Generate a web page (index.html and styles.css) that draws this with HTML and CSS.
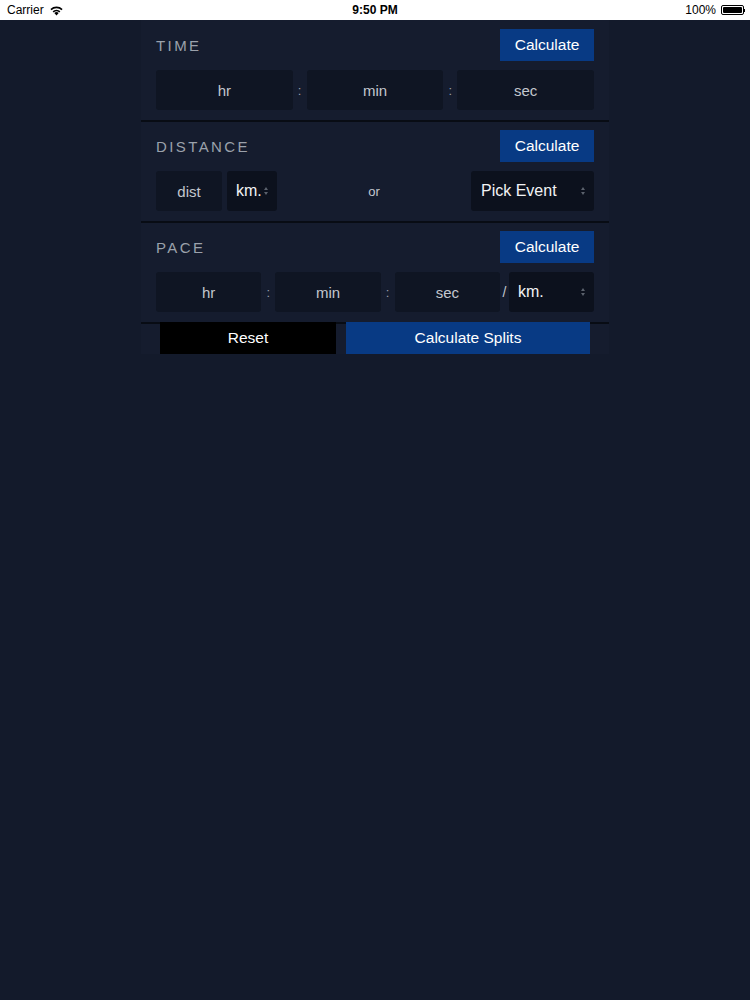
FILE: index.html
```html
<!DOCTYPE html>
<html lang="en">
<head>
    <meta charset="UTF-8">
    <meta name="viewport" content="width=device-width, initial-scale=1.0">
    <title>Pace Calculator</title>
    <link rel="stylesheet" href="styles.css">
</head>
<body>
    <div class="status-bar">
        <div class="status-left">
            Carrier
            <svg class="wifi" width="15" height="11" viewBox="0 0 15 11">
                <path d="M7.5 10.5 L5.3 8.1 A3.2 3.2 0 0 1 9.7 8.1 Z" fill="#000"/>
                <path d="M3.6 6.3 A5.6 5.6 0 0 1 11.4 6.3 L10.3 7.5 A4 4 0 0 0 4.7 7.5 Z" fill="#000"/>
                <path d="M1.4 4 A8.8 8.8 0 0 1 13.6 4 L12.5 5.2 A7.2 7.2 0 0 0 2.5 5.2 Z" fill="#000"/>
            </svg>
        </div>
        <div class="status-time">9:50 PM</div>
        <div class="status-right">
            100%
            <span class="battery"><span class="battery-level"></span></span>
            <span class="battery-nub"></span>
        </div>
    </div>

    <div class="panel">
        <div class="section">
            <div class="section-head">
                <span class="section-title">TIME</span>
                <button type="button" class="calc-btn">Calculate</button>
            </div>
            <div class="row">
                <div class="field grow">hr</div>
                <span class="sep">:</span>
                <div class="field grow">min</div>
                <span class="sep">:</span>
                <div class="field grow">sec</div>
            </div>
        </div>

        <div class="section">
            <div class="section-head">
                <span class="section-title">DISTANCE</span>
                <button type="button" class="calc-btn">Calculate</button>
            </div>
            <div class="row">
                <div class="field dist">dist</div>
                <div class="select unit-small">km.<span class="arrows"></span></div>
                <span class="or">or</span>
                <div class="select event">Pick Event<span class="arrows"></span></div>
            </div>
        </div>

        <div class="section">
            <div class="section-head">
                <span class="section-title">PACE</span>
                <button type="button" class="calc-btn">Calculate</button>
            </div>
            <div class="row">
                <div class="field grow">hr</div>
                <span class="sep">:</span>
                <div class="field grow">min</div>
                <span class="sep">:</span>
                <div class="field grow">sec</div>
                <span class="sep slash">/</span>
                <div class="select unit-wide">km.<span class="arrows"></span></div>
            </div>
        </div>

        <div class="actions">
            <button type="button" class="reset-btn">Reset</button>
            <button type="button" class="splits-btn">Calculate Splits</button>
        </div>
    </div>
</body>
</html>
```

FILE: styles.css
```css
body {
    margin: 0;
    padding: 0;
    background-color: #131a2b;
    font-family: "Liberation Sans", Arial, sans-serif;
    min-height: 1000px;
}
.status-bar {
    height: 20px;
    background-color: #fff;
    display: flex;
    align-items: center;
    justify-content: space-between;
    padding: 0 5px 0 7px;
    font-size: 12px;
    color: #000;
    position: relative;
}
.status-left {
    display: flex;
    align-items: center;
    gap: 5px;
    width: 120px;
}
.status-time {
    position: absolute;
    left: 0;
    right: 0;
    text-align: center;
    font-weight: bold;
    font-size: 12px;
}
.status-right {
    display: flex;
    align-items: center;
    justify-content: flex-end;
    width: 120px;
    gap: 3px;
}
.battery {
    display: inline-block;
    width: 23px;
    height: 10px;
    border: 1px solid #000;
    border-radius: 2px;
    padding: 1px;
    box-sizing: border-box;
    margin-left: 2px;
}
.battery-level {
    display: block;
    width: 100%;
    height: 100%;
    background-color: #000;
    border-radius: 1px;
}
.battery-nub {
    display: inline-block;
    width: 1px;
    height: 3px;
    background-color: #000;
    margin-left: -3px;
}
.panel {
    width: 468px;
    margin: 0 auto;
    background-color: #151c2e;
}
.section {
    padding: 8px 15px 10px;
    border-bottom: 2px solid #080c14;
}
.section:first-child {
    padding-top: 9px;
}
.section-head {
    display: flex;
    justify-content: space-between;
    align-items: center;
    height: 32px;
}
.section-title {
    color: #9ba1ab;
    font-size: 15px;
    letter-spacing: 2.4px;
}
.calc-btn {
    background-color: #083a84;
    color: #fff;
    border: none;
    width: 94px;
    height: 32px;
    font-family: inherit;
    font-size: 15.5px;
    padding: 0;
}
.row {
    display: flex;
    align-items: center;
    height: 40px;
    margin-top: 9px;
}
.field {
    height: 40px;
    background-color: #0f1523;
    border-radius: 3px;
    color: #c3c7ce;
    font-size: 15px;
    display: flex;
    align-items: center;
    justify-content: center;
}
.grow {
    flex: 1;
}
.sep {
    width: 14px;
    text-align: center;
    color: #9ba1ab;
    font-size: 13px;
}
.slash {
    width: 9px;
    color: #c3c7ce;
    font-size: 14px;
}
.dist {
    width: 66px;
}
.select {
    height: 40px;
    background-color: #0c111d;
    border-radius: 3px;
    color: #f2f3f5;
    font-size: 16px;
    display: flex;
    align-items: center;
    position: relative;
    box-sizing: border-box;
}
.unit-small {
    width: 50px;
    margin-left: 5px;
    padding-left: 9px;
}
.event {
    width: 123px;
    padding-left: 10px;
}
.unit-wide {
    width: 85px;
    padding-left: 9px;
}
.arrows {
    position: absolute;
    right: 8px;
    top: 16px;
    width: 5px;
    height: 8px;
}
.arrows::before,
.arrows::after {
    content: "";
    position: absolute;
    left: 0;
    border-left: 2.5px solid transparent;
    border-right: 2.5px solid transparent;
}
.arrows::before {
    top: 0;
    border-bottom: 3px solid #5b616c;
}
.arrows::after {
    bottom: 0;
    border-top: 3px solid #5b616c;
}
.or {
    flex: 1;
    text-align: center;
    color: #c3c7ce;
    font-size: 13px;
}
.actions {
    display: flex;
    gap: 10px;
    padding: 0 19px 0;
    margin-top: -2px;
}
.reset-btn,
.splits-btn {
    height: 32px;
    border: none;
    color: #fff;
    font-family: inherit;
    font-size: 15.5px;
    padding: 0;
}
.reset-btn {
    width: 176px;
    background-color: #000;
}
.splits-btn {
    flex: 1;
    background-color: #083a84;
}
```
